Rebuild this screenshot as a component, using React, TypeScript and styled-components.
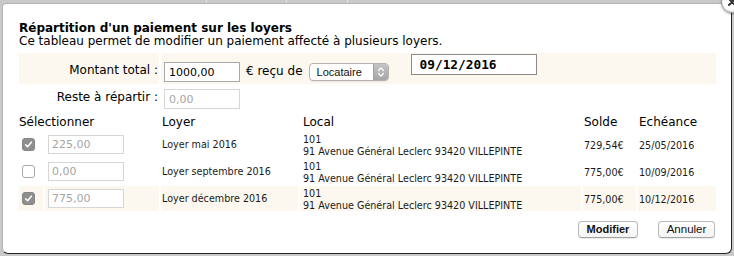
import React from 'react'
import styled, { createGlobalStyle } from 'styled-components'

const GlobalStyle = createGlobalStyle`
  html, body {
    margin: 0;
    padding: 0;
    background: #c9c9c9;
  }
  body {
    font-family: "DejaVu Sans", Verdana, sans-serif;
    color: #000;
  }
`

const Page = styled.div`
  width: 734px;
  height: 256px;
  overflow: hidden;
  display: flex;
  flex-direction: column;
`

const Backdrop = styled.div`
  height: 3px;
  flex-shrink: 0;
  overflow: hidden;
  display: flex;
  padding-left: 206px;
`

const BackButton = styled.div<{ $width: number }>`
  width: ${(p) => p.$width}px;
  height: 18px;
  margin-top: -15px;
  border-left: 1px solid #e2e2e2;
  font: bold 12px "Liberation Sans", Arial, sans-serif;
  line-height: 17px;
  color: #222;
  text-align: center;
  &:last-child {
    border-right: 1px solid #e2e2e2;
  }
`

const Dialog = styled.div`
  position: relative;
  box-sizing: border-box;
  margin-left: 2px;
  width: 730px;
  height: 251px;
  background: #fff;
  border: 1px solid #b4b4b4;
  border-right-color: #262626;
  border-bottom-color: #262626;
  border-radius: 4px 4px 6px 6px;
  padding: 18px 15px 0 16px;
  display: flex;
  flex-direction: column;
`

const CloseButton = styled.div`
  position: absolute;
  top: -13px;
  right: -12px;
  width: 22px;
  height: 22px;
  box-sizing: border-box;
  border-radius: 50%;
  border: 1px solid #9a9a9a;
  background: radial-gradient(circle at 50% 40%, #ffffff 55%, #dcdcdc 100%);
  box-shadow: 0 1px 2px rgba(0, 0, 0, 0.35);
  display: flex;
  align-items: center;
  justify-content: center;
`

const Title = styled.div`
  font-size: 12px;
  font-weight: bold;
  line-height: 13px;
`

const Subtitle = styled.div`
  font-size: 12px;
  line-height: 12px;
`

const Grid = styled.div`
  margin-top: 6px;
  display: grid;
  grid-template-columns: 24px 114px 137px 281px 53px 78px;
  grid-template-rows: 31px 25px 17px 25px 25px 25px;
  gap: 2px;
`

const FormLabel = styled.div<{ $shaded?: boolean; $top: number }>`
  grid-column: span 2;
  display: flex;
  justify-content: flex-end;
  align-items: flex-start;
  padding: ${(p) => p.$top}px 1px 0 0;
  background: ${(p) => (p.$shaded ? '#fcf8ef' : 'transparent')};
  font-size: 12px;
  line-height: 14px;
`

const FormContent = styled.div<{ $shaded?: boolean }>`
  grid-column: span 4;
  display: flex;
  align-items: flex-start;
  padding-left: 3px;
  background: ${(p) => (p.$shaded ? '#fcf8ef' : 'transparent')};
`

const AmountInput = styled.input<{ $top: number }>`
  box-sizing: border-box;
  width: 76px;
  height: 20px;
  margin: ${(p) => p.$top}px 0 0 0;
  padding: 0 0 0 4px;
  border: 1px solid #a9a9a9;
  background: #fff;
  font: 11px "DejaVu Sans", Verdana, sans-serif;
  color: #000;
  outline: none;
  &:disabled {
    border-color: #d6d6d6;
    color: #a5a5a5;
    background: #fff;
  }
`

const InlineText = styled.span`
  margin: 11px 0 0 6px;
  font-size: 12px;
  line-height: 14px;
`

const Select = styled.div`
  box-sizing: border-box;
  margin: 10px 0 0 6px;
  width: 80px;
  height: 18px;
  display: flex;
  border: 1px solid #b3b3b3;
  border-radius: 4px;
  overflow: hidden;
  background: #fff;
  box-shadow: 0 1px 0 rgba(0, 0, 0, 0.06);
`

const SelectText = styled.span`
  flex: 1;
  padding-left: 7px;
  font: 11px "Liberation Sans", Arial, sans-serif;
  line-height: 16px;
  color: #111;
`

const Stepper = styled.span`
  width: 14px;
  display: flex;
  align-items: center;
  justify-content: center;
  background: linear-gradient(#c4c4c4, #a6a6a6);
  border-left: 1px solid #a0a0a0;
`

const DateInput = styled.input`
  box-sizing: border-box;
  margin: 1px 0 0 22px;
  width: 126px;
  height: 21px;
  padding: 0 0 0 8px;
  border: 1px solid #8a8a8a;
  background: #fff;
  font: bold 12.8px "DejaVu Sans Mono", "Liberation Mono", monospace;
  color: #000;
  outline: none;
`

const HeadCell = styled.div<{ $span?: number; $pad?: number }>`
  grid-column: span ${(p) => p.$span ?? 1};
  padding: 2px 0 0 ${(p) => p.$pad ?? 1}px;
  font-size: 12px;
  line-height: 14px;
  white-space: nowrap;
`

const Cell = styled.div<{ $shaded?: boolean; $pad?: number }>`
  display: flex;
  align-items: center;
  padding-left: ${(p) => p.$pad ?? 1}px;
  background: ${(p) => (p.$shaded ? '#fcf8ef' : 'transparent')};
  font-size: 9.6px;
  line-height: 12px;
  color: #1a1a1a;
  white-space: nowrap;
`

const LocalCell = styled(Cell)`
  flex-direction: column;
  align-items: flex-start;
  justify-content: center;
  padding-top: 2px;
`

const DataCell = styled(Cell)`
  align-items: flex-start;
  padding-top: 8px;
`

const Check = styled.span<{ $checked: boolean }>`
  box-sizing: border-box;
  width: 13px;
  height: 13px;
  border-radius: 3px;
  display: flex;
  align-items: center;
  justify-content: center;
  border: 1px solid ${(p) => (p.$checked ? '#868686' : '#a9a9a9')};
  background: ${(p) => (p.$checked ? '#8e8e8e' : '#fff')};
`

const RowInput = styled(AmountInput)`
  height: 19px;
  margin: 0 0 0 3px;
  padding-left: 3px;
`

const Actions = styled.div`
  margin-top: 10px;
  padding-right: 1px;
  display: flex;
  justify-content: flex-end;
  gap: 20px;
`

const Button = styled.button<{ $primary?: boolean }>`
  box-sizing: border-box;
  height: 17px;
  width: ${(p) => (p.$primary ? 60 : 57)}px;
  padding: 0;
  border: 1px solid #b9b9b9;
  border-bottom-color: #a2a2a2;
  border-radius: 4px;
  background: linear-gradient(#ffffff, #f4f4f4);
  box-shadow: 0 1px 1px rgba(0, 0, 0, 0.08);
  font: ${(p) => (p.$primary ? 'bold 11px' : '11.5px')} "Liberation Sans", Arial, sans-serif;
  line-height: 15px;
  color: #111;
`

type Loyer = {
  checked: boolean
  amount: string
  label: string
  solde: string
  echeance: string
}

const loyers: Loyer[] = [
  { checked: true, amount: '225,00', label: 'Loyer mai 2016', solde: '729,54€', echeance: '25/05/2016' },
  { checked: false, amount: '0,00', label: 'Loyer septembre 2016', solde: '775,00€', echeance: '10/09/2016' },
  { checked: true, amount: '775,00', label: 'Loyer décembre 2016', solde: '775,00€', echeance: '10/12/2016' },
]

const CheckMark = () => (
  <svg width="9" height="9" viewBox="0 0 9 9">
    <path d="M1.6 4.8 L3.6 6.8 L7.4 2.2" fill="none" stroke="#fff" strokeWidth="1.5" strokeLinecap="round" strokeLinejoin="round" />
  </svg>
)

const Chevrons = () => (
  <svg width="8" height="12" viewBox="0 0 8 12">
    <path d="M1.5 4.5 L4 2 L6.5 4.5 M1.5 7.5 L4 10 L6.5 7.5" fill="none" stroke="#fff" strokeWidth="1.2" strokeLinecap="round" strokeLinejoin="round" />
  </svg>
)

const CloseGlyph = () => (
  <svg width="10" height="10" viewBox="0 0 10 10">
    <path d="M2 2 L8 8 M8 2 L2 8" stroke="#333" strokeWidth="2" strokeLinecap="round" />
  </svg>
)

export default function App() {
  return (
    <>
      <GlobalStyle />
      <Page>
        <Backdrop>
          <BackButton $width={79}>Enregistrer</BackButton>
          <BackButton $width={60}>Annuler</BackButton>
        </Backdrop>
        <Dialog>
          <CloseButton>
            <CloseGlyph />
          </CloseButton>
          <Title>Répartition d'un paiement sur les loyers</Title>
          <Subtitle>Ce tableau permet de modifier un paiement affecté à plusieurs loyers.</Subtitle>
          <Grid>
            <FormLabel $shaded $top={10}>Montant total :</FormLabel>
            <FormContent $shaded>
              <AmountInput $top={9} readOnly value="1000,00" />
              <InlineText>€ reçu de</InlineText>
              <Select>
                <SelectText>Locataire</SelectText>
                <Stepper>
                  <Chevrons />
                </Stepper>
              </Select>
              <DateInput readOnly value="09/12/2016" />
            </FormContent>

            <FormLabel $top={4}>Reste à répartir :</FormLabel>
            <FormContent>
              <AmountInput $top={3} disabled value="0,00" />
            </FormContent>

            <HeadCell $span={2} $pad={0}>Sélectionner</HeadCell>
            <HeadCell>Loyer</HeadCell>
            <HeadCell $pad={3}>Local</HeadCell>
            <HeadCell>Solde</HeadCell>
            <HeadCell>Echéance</HeadCell>

            {loyers.map((l, i) => {
              const shaded = i === loyers.length - 1
              return (
                <React.Fragment key={l.label}>
                  <Cell $shaded={shaded} $pad={3}>
                    <Check $checked={l.checked}>{l.checked && <CheckMark />}</Check>
                  </Cell>
                  <Cell $shaded={shaded} $pad={0}>
                    <RowInput $top={0} disabled value={l.amount} />
                  </Cell>
                  <Cell $shaded={shaded}>{l.label}</Cell>
                  <LocalCell $shaded={shaded} $pad={3}>
                    <span>101</span>
                    <span>91 Avenue Général Leclerc 93420 VILLEPINTE</span>
                  </LocalCell>
                  <DataCell $shaded={shaded}>{l.solde}</DataCell>
                  <DataCell $shaded={shaded}>{l.echeance}</DataCell>
                </React.Fragment>
              )
            })}
          </Grid>
          <Actions>
            <Button $primary>Modifier</Button>
            <Button>Annuler</Button>
          </Actions>
        </Dialog>
      </Page>
    </>
  )
}
